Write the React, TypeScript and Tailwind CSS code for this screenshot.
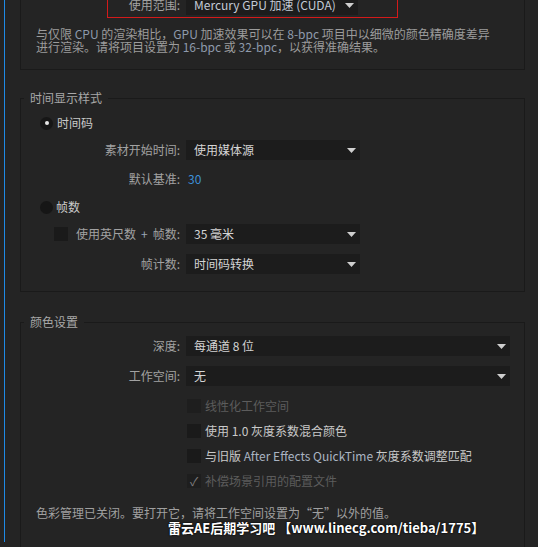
import type { ReactNode } from 'react';

function Caret() {
  return (
    <svg width="9" height="5" viewBox="0 0 9 5" className="shrink-0">
      <path d="M0 0H9L4.5 5Z" fill="#cfcfcf" />
    </svg>
  );
}

function Select({ children, size = 'md' }: { children: ReactNode; size?: 'sm' | 'md' | 'lg' }) {
  const width = size === 'lg' ? 'w-[324px]' : size === 'sm' ? 'w-[172px]' : 'w-[174px]';
  return (
    <div className={`flex h-[20px] items-center justify-between bg-[#1c1c1c] pl-[8px] pr-[4px] text-[#d4d4d4] ${width}`}>
      <span className="whitespace-nowrap">{children}</span>
      <Caret />
    </div>
  );
}

function Row({ label, children, className = '' }: { label: ReactNode; children: ReactNode; className?: string }) {
  return (
    <div className={`flex h-[20px] items-center ${className}`}>
      <div className="w-[165px] pr-[6px] text-right text-[#a2a2a2]">{label}:</div>
      {children}
    </div>
  );
}

function Radio({ checked }: { checked?: boolean }) {
  return (
    <span className="flex h-[13px] w-[13px] shrink-0 items-center justify-center rounded-full bg-[#161616]">
      {checked && <span className="h-[4px] w-[4px] rounded-full bg-[#e6e6e6]" />}
    </span>
  );
}

function Check({ checked, disabled }: { checked?: boolean; disabled?: boolean }) {
  return (
    <span
      className={`flex h-[14px] w-[14px] shrink-0 items-center justify-center text-[12px] leading-none text-[#7c7c7c] ${
        disabled ? 'bg-[#1e1e1e]' : 'bg-[#1a1a1a]'
      }`}
    >
      {checked && '✓'}
    </span>
  );
}

function Option({ children, checked, disabled, className = '' }: { children: ReactNode; checked?: boolean; disabled?: boolean; className?: string }) {
  return (
    <div className={`ml-[166px] flex h-[20px] items-center gap-[4px] ${className}`}>
      <Check checked={checked} disabled={disabled} />
      <span className={disabled ? 'text-[#5c5c5c]' : 'text-[#c9c9c9]'}>{children}</span>
    </div>
  );
}

const Latin = ({ children }: { children: ReactNode }) => <span className="text-[#8e9aab]">{children}</span>;

export default function App() {
  return (
    <div className="h-[547px] w-[538px] overflow-hidden bg-[#242424] pl-[4px] font-['Noto_Sans_CJK_SC',sans-serif] text-[12px] leading-[16px]">
      <div className="h-full border-l border-[#1f8ae6] pl-[15px]">
        {/* GPU panel, top edge scrolled off */}
        <div className="w-[505px] border-x border-b border-[#1a1a1a] pb-[16px]">
          <div className="ml-[86px] w-[291px] border-x border-b border-[#d31a1a] pb-[2px]">
            <div className="-mt-[5px] flex h-[20px] items-center">
              <div className="w-[78px] pr-[6px] text-right text-[#a2a2a2]">使用范围:</div>
              <Select size="sm">
                <span className="text-[#c3cad6]">Mercury GPU 加速 (CUDA)</span>
              </Select>
            </div>
          </div>
          <p className="mt-[9px] pl-[15px] pr-[10px] leading-[13px] text-[#9c9c9c]">
            与仅限 <Latin>CPU</Latin> 的渲染相比，<Latin>GPU</Latin> 加速效果可以在 <Latin>8-bpc</Latin> 项目中以细微的颜色精确度差异
            <br />
            进行渲染。请将项目设置为 <Latin>16-bpc</Latin> 或 <Latin>32-bpc</Latin>，以获得准确结果。
          </p>
        </div>

        {/* 时间显示样式 */}
        <fieldset className="mt-[20px] w-[505px] border border-[#1a1a1a] pb-[17px]">
          <legend className="ml-[3px] px-[6px] text-[#a8a8a8]">时间显示样式</legend>
          <div className="mt-[7px] ml-[19px] flex h-[20px] items-center gap-[4px] text-[#c9c9c9]">
            <Radio checked />
            时间码
          </div>
          <Row label="素材开始时间" className="mt-[7px]">
            <Select>使用媒体源</Select>
          </Row>
          <Row label="默认基准" className="mt-[9px]">
            <span className="pl-[2px] text-[#3d8fd8]">30</span>
          </Row>
          <div className="mt-[8px] ml-[19px] flex h-[20px] items-center gap-[3px] text-[#c9c9c9]">
            <Radio />
            帧数
          </div>
          <div className="mt-[7px] flex h-[20px] items-center">
            <div className="flex w-[165px] items-center pl-[33px] pr-[6px]">
              <Check />
              <span className="ml-auto text-[#a2a2a2]">
                使用英尺数<span className="mx-[5px] text-[#9aa6b6]">+</span>帧数:
              </span>
            </div>
            <Select>35 毫米</Select>
          </div>
          <Row label="帧计数" className="mt-[10px]">
            <Select>时间码转换</Select>
          </Row>
        </fieldset>

        {/* 颜色设置 */}
        <fieldset className="mt-[22px] w-[505px] border border-[#1a1a1a] pb-[40px]">
          <legend className="ml-[3px] px-[6px] text-[#a8a8a8]">颜色设置</legend>
          <Row label="深度" className="mt-[6px]">
            <Select size="lg">每通道 8 位</Select>
          </Row>
          <Row label="工作空间" className="mt-[10px]">
            <Select size="lg">无</Select>
          </Row>
          <Option disabled className="mt-[10px]">线性化工作空间</Option>
          <Option className="mt-[5px]">使用 1.0 灰度系数混合颜色</Option>
          <Option className="mt-[5px]">
            与旧版 <span className="text-[#aab4c2]">After Effects QuickTime</span> 灰度系数调整匹配
          </Option>
          <Option checked disabled className="mt-[5px]">补偿场景引用的配置文件</Option>
          <p className="mt-[14px] pl-[15px] text-[#a0a0a0]">色彩管理已关闭。要打开它，请将工作空间设置为“无”以外的值。</p>
          <div className="-mt-[1px] whitespace-pre pl-[147px] text-[13px] font-bold leading-[15px] text-white [text-shadow:0_0_2px_#000,0_0_1px_#000]">
            雷云AE后期学习吧 【www.linecg.com/tieba/1775】
          </div>
        </fieldset>
      </div>
    </div>
  );
}
